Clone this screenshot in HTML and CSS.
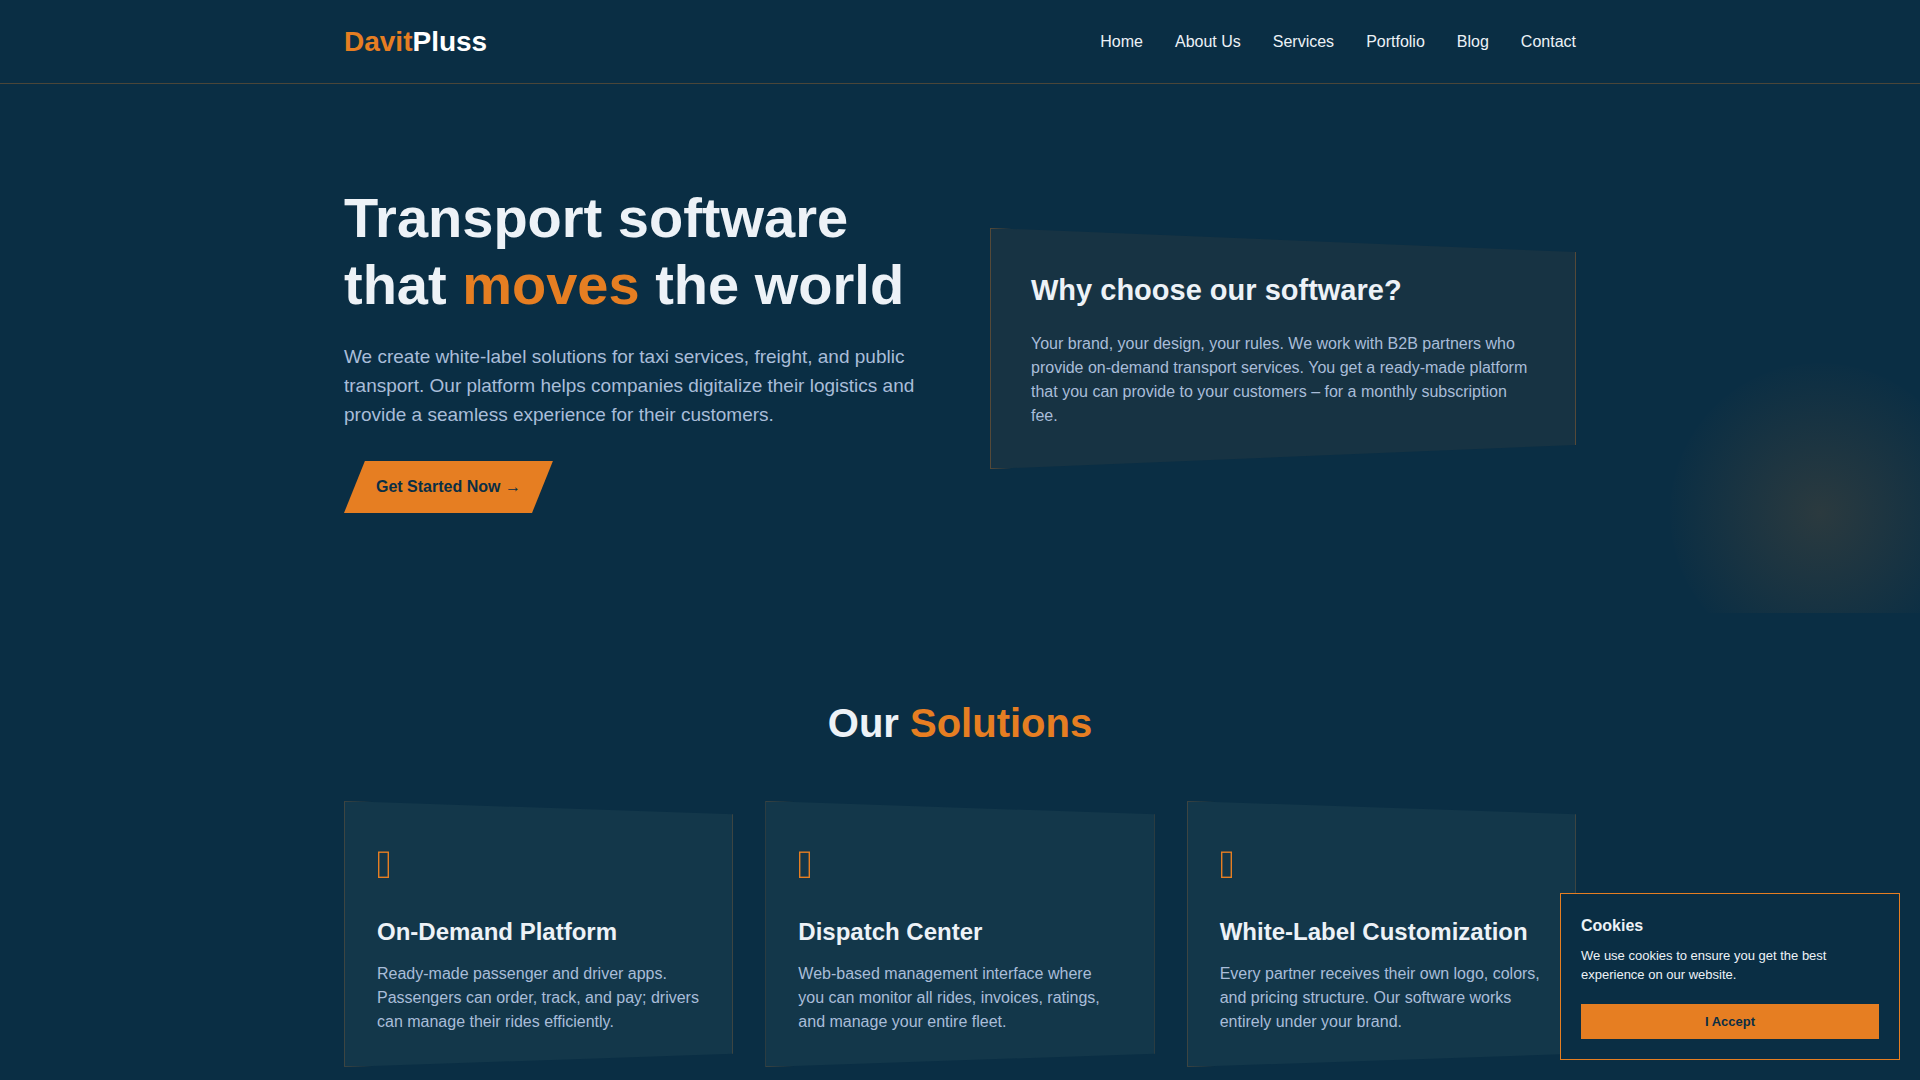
FILE: index.html
```html
<!DOCTYPE html>
<html lang="en">
<head>
<meta charset="utf-8">
<meta name="viewport" content="width=device-width, initial-scale=1">
<title>DavitPluss</title>
<link rel="stylesheet" href="styles.css">
</head>
<body>
<header class="site-header">
  <div class="container header-row">
    <a class="logo" href="#"><span class="accent">Davit</span>Pluss</a>
    <nav class="nav" aria-label="Main">
      <a href="#">Home</a>
      <a href="#">About Us</a>
      <a href="#">Services</a>
      <a href="#">Portfolio</a>
      <a href="#">Blog</a>
      <a href="#">Contact</a>
    </nav>
  </div>
</header>
<main>
  <section class="hero">
    <div class="container hero-grid">
      <div>
        <h1>Transport software that <span class="accent">moves</span> the world</h1>
        <p class="lead">We create white-label solutions for taxi services, freight, and public transport. Our platform helps companies digitalize their logistics and provide a seamless experience for their customers.</p>
        <a class="cta" href="#">Get Started Now →</a>
      </div>
      <aside class="why">
        <h2>Why choose our software?</h2>
        <p>Your brand, your design, your rules. We work with B2B partners who provide on-demand transport services. You get a ready-made platform that you can provide to your customers – for a monthly subscription fee.</p>
      </aside>
    </div>
  </section>
  <section class="solutions">
    <div class="container">
      <h2 class="section-title">Our <span class="accent">Solutions</span></h2>
      <div class="cards">
        <article class="card">
          <svg class="icon" viewBox="0 0 12 60" aria-hidden="true"><rect x="1.7" y="18.2" width="9.6" height="25.1"/></svg>
          <h3>On-Demand Platform</h3>
          <p>Ready-made passenger and driver apps. Passengers can order, track, and pay; drivers can manage their rides efficiently.</p>
        </article>
        <article class="card">
          <svg class="icon" viewBox="0 0 12 60" aria-hidden="true"><rect x="1.7" y="18.2" width="9.6" height="25.1"/></svg>
          <h3>Dispatch Center</h3>
          <p>Web-based management interface where you can monitor all rides, invoices, ratings, and manage your entire fleet.</p>
        </article>
        <article class="card">
          <svg class="icon" viewBox="0 0 12 60" aria-hidden="true"><rect x="1.7" y="18.2" width="9.6" height="25.1"/></svg>
          <h3>White-Label Customization</h3>
          <p>Every partner receives their own logo, colors, and pricing structure. Our software works entirely under your brand.</p>
        </article>
      </div>
    </div>
  </section>
</main>
<div class="cookies" role="dialog" aria-labelledby="cookies-title">
  <h4 id="cookies-title">Cookies</h4>
  <p>We use cookies to ensure you get the best experience on our website.</p>
  <button type="button">I Accept</button>
</div>
</body>
</html>
```
FILE: styles.css
```css
:root {
  --bg: #0a2e44;
  --orange: #e67e22;
  --light: #edf2f7;
  --muted: #a9bdd9;
}

* {
  box-sizing: border-box;
  margin: 0;
  padding: 0;
}

body {
  background: var(--bg);
  color: var(--light);
  font-family: "Liberation Sans", Arial, sans-serif;
  font-size: 16px;
  line-height: 24px;
}

a {
  color: inherit;
  text-decoration: none;
}

.accent {
  color: var(--orange);
}

.container {
  max-width: 1280px;
  margin: 0 auto;
  padding: 0 24px;
}

.site-header {
  padding: 20px 0;
  border-bottom: 1px solid rgba(230, 126, 34, 0.3);
}

.header-row {
  display: flex;
  align-items: center;
  justify-content: space-between;
}

.logo {
  color: #fff;
  font-size: 28px;
  line-height: 43px;
  font-weight: 700;
}

.nav {
  display: flex;
  flex-wrap: wrap;
  gap: 0 32px;
}

.hero {
  position: relative;
  overflow: hidden;
  padding: 100px 0;
}

/* soft glow in the lower right corner */
.hero::after {
  content: "";
  position: absolute;
  right: -50px;
  bottom: -50px;
  width: 300px;
  height: 300px;
  background: radial-gradient(circle, var(--orange) 0%, transparent 73%);
  opacity: 0.15;
  border-radius: 50%;
}

.hero-grid {
  display: grid;
  grid-template-columns: 1fr 1fr;
  gap: 60px;
  align-items: center;
}

h1 {
  font-size: 56px;
  line-height: 67px;
  margin-bottom: 24px;
}

.lead {
  color: var(--muted);
  font-size: 19px;
  line-height: 29px;
  margin-bottom: 32px;
}

.cta {
  display: block;
  width: fit-content;
  padding: 14px 32px;
  background: var(--orange);
  color: var(--bg);
  font-weight: 700;
  clip-path: polygon(10% 0, 100% 0, 90% 100%, 0 100%);
}

.why {
  padding: 40px;
  background: #173343;
  border: 1px solid rgba(230, 126, 34, 0.3);
  clip-path: polygon(0 0, 100% 10%, 100% 90%, 0 100%);
}

.why h2 {
  font-size: 29px;
  line-height: 43px;
  margin-bottom: 20px;
}

.why p,
.card p {
  color: var(--muted);
}

.solutions {
  padding: 80px 0;
}

.section-title {
  font-size: 40px;
  line-height: 60px;
  margin-bottom: 48px;
  text-align: center;
}

.cards {
  display: grid;
  grid-template-columns: repeat(3, 1fr);
  gap: 32px;
}

.card {
  padding: 32px;
  background: #13374a;
  border: 1px solid rgba(230, 126, 34, 0.2);
  clip-path: polygon(0 0, 100% 5%, 100% 95%, 0 100%);
}

.icon {
  display: block;
  width: 12px;
  height: 60px;
  margin-bottom: 20px;
  fill: none;
  stroke: var(--orange);
  stroke-width: 1.4;
}

.card h3 {
  font-size: 24px;
  line-height: 36px;
  margin-bottom: 12px;
}

.cookies {
  position: fixed;
  right: 20px;
  bottom: 20px;
  width: 340px;
  padding: 20px;
  background: var(--bg);
  border: 1px solid var(--orange);
}

.cookies h4 {
  font-size: 16px;
  margin-bottom: 8px;
}

.cookies p {
  font-size: 13px;
  line-height: 19px;
  margin-bottom: 20px;
}

.cookies button {
  display: block;
  width: 100%;
  padding: 10px;
  border: 0;
  background: var(--orange);
  color: var(--bg);
  font-family: inherit;
  font-size: 13px;
  line-height: 15px;
  font-weight: 700;
  cursor: pointer;
}

@media (max-width: 900px) {
  .header-row {
    flex-direction: column;
  }

  .hero-grid,
  .cards {
    grid-template-columns: 1fr;
  }
}
```
